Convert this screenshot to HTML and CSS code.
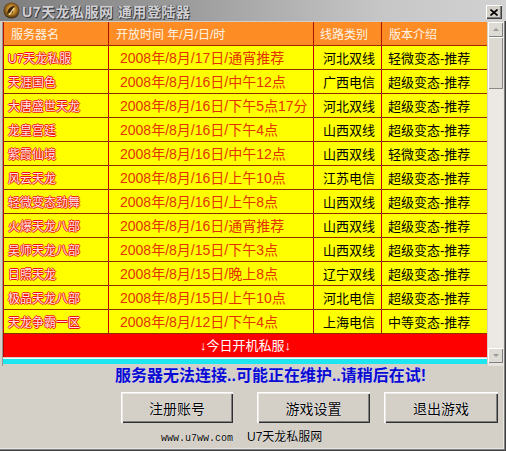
FILE: index.html
```html
<!DOCTYPE html>
<html lang="zh-CN">
<head>
<meta charset="utf-8">
<title>U7天龙私服网 通用登陆器</title>
<link rel="stylesheet" href="styles.css">
</head>
<body>
<div class="window">
  <div class="titlebar">
    <svg class="app-icon" width="17" height="17" viewBox="0 0 17 17">
      <defs>
        <radialGradient id="gold" cx="50%" cy="45%" r="55%">
          <stop offset="0" stop-color="#f6d27a"/>
          <stop offset="0.55" stop-color="#b07a22"/>
          <stop offset="1" stop-color="#3a2410"/>
        </radialGradient>
      </defs>
      <circle cx="8.5" cy="8.5" r="8" fill="url(#gold)"/>
      <path d="M4 12 C5 6 8 4 12 4 C10 6 9 8 10 11 C8 10 6 11 4 12Z" fill="#3b220c"/>
      <path d="M6 13 L11 6" stroke="#ffe9a8" stroke-width="1.2"/>
    </svg>
    <span class="title">U7天龙私服网 通用登陆器</span>
    <button class="close" aria-label="关闭">
      <svg width="8" height="7" viewBox="0 0 8 7"><path d="M0.5 0.5 L7.5 6.5 M7.5 0.5 L0.5 6.5" stroke="#000" stroke-width="1.6"/></svg>
    </button>
  </div>

  <div class="frame">
    <div class="content">
      <table class="servers">
        <colgroup>
          <col class="c-name"><col class="c-time"><col class="c-line"><col class="c-ver">
        </colgroup>
        <thead>
          <tr>
            <th class="h-name">服务器名</th>
            <th class="h-time">开放时间 年/月/日/时</th>
            <th class="h-line">线路类别</th>
            <th class="h-ver">版本介绍</th>
          </tr>
        </thead>
        <tbody>
          <tr><td class="name">U7天龙私服</td><td class="time">2008年/8月/17日/通宵推荐</td><td class="line">河北双线</td><td class="ver">轻微变态-推荐</td></tr>
          <tr><td class="name">天涯国色</td><td class="time">2008年/8月/16日/中午12点</td><td class="line">广西电信</td><td class="ver">超级变态-推荐</td></tr>
          <tr><td class="name">大唐盛世天龙</td><td class="time">2008年/8月/16日/下午5点17分</td><td class="line">河北双线</td><td class="ver">超级变态-推荐</td></tr>
          <tr><td class="name">龙皇宫廷</td><td class="time">2008年/8月/16日/下午4点</td><td class="line">山西双线</td><td class="ver">超级变态-推荐</td></tr>
          <tr><td class="name">紫霞仙境</td><td class="time">2008年/8月/16日/中午12点</td><td class="line">山西双线</td><td class="ver">轻微变态-推荐</td></tr>
          <tr><td class="name">风云天龙</td><td class="time">2008年/8月/16日/上午10点</td><td class="line">江苏电信</td><td class="ver">超级变态-推荐</td></tr>
          <tr><td class="name">轻微变态劲舞</td><td class="time">2008年/8月/16日/上午8点</td><td class="line">山西双线</td><td class="ver">超级变态-推荐</td></tr>
          <tr><td class="name">火爆天龙八部</td><td class="time">2008年/8月/16日/通宵推荐</td><td class="line">山西双线</td><td class="ver">超级变态-推荐</td></tr>
          <tr><td class="name">吴师天龙八部</td><td class="time">2008年/8月/15日/下午3点</td><td class="line">山西双线</td><td class="ver">超级变态-推荐</td></tr>
          <tr><td class="name">日照天龙</td><td class="time">2008年/8月/15日/晚上8点</td><td class="line">辽宁双线</td><td class="ver">超级变态-推荐</td></tr>
          <tr><td class="name">极品天龙八部</td><td class="time">2008年/8月/15日/上午10点</td><td class="line">河北电信</td><td class="ver">超级变态-推荐</td></tr>
          <tr><td class="name">天龙争霸一区</td><td class="time">2008年/8月/12日/下午4点</td><td class="line">上海电信</td><td class="ver">中等变态-推荐</td></tr>
        </tbody>
      </table>
      <div class="today">↓今日开机私服↓</div>
      <div class="next-strip"></div>
    </div>
    <div class="scrollbar">
      <div class="sb-btn sb-up"><span class="arrow up"></span></div>
      <div class="sb-thumb"></div>
      <div class="sb-track"></div>
      <div class="sb-btn sb-down"><span class="arrow down"></span></div>
    </div>
  </div>

  <div class="message">服务器无法连接..可能正在维护..请稍后在试!</div>

  <div class="buttons">
    <button class="btn btn-reg">注册账号</button>
    <button class="btn btn-set">游戏设置</button>
    <button class="btn btn-exit">退出游戏</button>
  </div>

  <div class="footer"><span class="url">www.u7ww.com</span><span class="site">U7天龙私服网</span></div>
</div>
</body>
</html>
```

FILE: styles.css
```css
* { box-sizing: border-box; }

html, body {
  margin: 0;
  padding: 0;
  background: #d4d0c8;
}

.window {
  width: 506px;
  height: 451px;
  background: #d4d0c8;
  font-family: "Liberation Sans", "Noto Sans CJK SC", sans-serif;
  box-shadow: inset -1px -1px 0 #404040, inset -2px -2px 0 #808080, inset -3px -3px 0 #e8e6e2;
  display: flex;
  flex-direction: column;
}

/* ---------- title bar ---------- */
.titlebar {
  height: 21px;
  display: flex;
  align-items: center;
  padding: 0 4px 0 3px;
  background: linear-gradient(to right, #7e7e7e 0%, #9a9a9a 35%, #c6c6c6 75%, #d2d2d2 100%);
}

.app-icon { flex: none; }

.title {
  margin-left: 2px;
  font-size: 14px;
  font-weight: bold;
  letter-spacing: 0.5px;
  color: #cfcfd4;
  text-shadow: 1px 1px 0 #3a3a3a, -1px 0 0 #5a5a5a;
  white-space: nowrap;
}

.close {
  margin-left: auto;
  margin-top: 3px;
  width: 16px;
  height: 14px;
  padding: 0;
  display: flex;
  align-items: center;
  justify-content: center;
  background: #d4d0c8;
  border: none;
  box-shadow: inset 1px 1px 0 #ffffff, inset -1px -1px 0 #404040, inset -2px -2px 0 #808080;
}

/* ---------- server list ---------- */
.frame {
  margin: 1px 3px 0 2px;
  height: 344px;
  display: flex;
  border-left: 1px solid #9a968e;
  overflow: hidden;
}

.content {
  width: 485px;
  overflow: hidden;
  background: #d4d0c8;
}

.servers {
  width: 484px;
  border-collapse: collapse;
  table-layout: fixed;
  background: #ffff00;
  font-size: 13px;
}

.c-name { width: 105px; }
.c-time { width: 205px; }
.c-line { width: 68px; }
.c-ver  { width: 106px; }

.servers th {
  height: 23px;
  padding: 0;
  text-align: left;
  font-weight: normal;
  font-size: 12px;
  color: #fff4e6;
  background: #fe8c25;
  border-left: 1px solid #b01000;
  border-right: 1px solid #b01000;
  border-bottom: 1px solid #a02800;
}

.h-name { padding-left: 7px !important; }
.h-time { padding-left: 7px !important; }
.h-line { padding-left: 6px !important; }
.h-ver  { padding-left: 7px !important; }

.servers td {
  height: 24px;
  padding: 0;
  white-space: nowrap;
  overflow: hidden;
  border-left: 1px solid #c80000;
  border-right: 1px solid #c80000;
  border-bottom: 1px solid #8a3000;
}

.name {
  padding-left: 4px !important;
  font-size: 12px;
  color: #ffe4e4;
  text-shadow: 1px 0 0 #f01010, -1px 0 0 #f01010, 0 1px 0 #f01010, 0 -1px 0 #f01010;
}

.time {
  padding-left: 11px !important;
  font-size: 14px;
  color: #e23200;
}

.line {
  padding-left: 9px !important;
  color: #000;
}

.ver {
  padding-left: 6px !important;
  color: #000;
}

.today {
  width: 484px;
  height: 23px;
  line-height: 23px;
  text-align: center;
  font-size: 13px;
  color: #ffffff;
  background: #ff0000;
  border-left: 1px solid #b00000;
}

.next-strip {
  width: 485px;
  height: 6px;
  margin-top: 1px;
  background: #1ee6f0;
  border-top: 1px solid #f4fcfc;
}

/* ---------- scrollbar ---------- */
.scrollbar {
  width: 15px;
  display: flex;
  flex-direction: column;
  background: #e6e3de;
  margin-left: 1px;
}

.sb-btn {
  height: 15px;
  flex: none;
  display: flex;
  align-items: center;
  justify-content: center;
  background: #dedad4;
  box-shadow: inset 1px 1px 0 #ffffff, inset -1px -1px 0 #808080;
}

.sb-thumb {
  height: 52px;
  flex: none;
  background: #dcd8d2;
  box-shadow: inset 1px 1px 0 #ffffff, inset -1px -1px 0 #8a8a8a;
}

.sb-track {
  flex: 1;
  background: #ece9e5;
}

.sb-down { margin-bottom: 3px; }

.arrow {
  width: 0;
  height: 0;
  border-left: 3px solid transparent;
  border-right: 3px solid transparent;
}
.arrow.up { border-bottom: 3px solid #9a9a9a; }
.arrow.down { border-top: 3px solid #9a9a9a; }

/* ---------- message ---------- */
.message {
  height: 18px;
  line-height: 18px;
  margin-top: 1px;
  padding-left: 115px;
  font-size: 16px;
  font-weight: bold;
  color: #0a0ad2;
  text-shadow: 0 0 1px #dcdcff;
  white-space: nowrap;
}

/* ---------- buttons ---------- */
.buttons {
  display: flex;
  margin-top: 7px;
  padding-left: 121px;
}

.btn {
  height: 31px;
  padding: 0;
  font-family: "Liberation Sans", "Noto Sans CJK SC", sans-serif;
  font-size: 14px;
  color: #000;
  text-shadow: 0 0 1px #ffffff, 0 0 1px #ffffff;
  background: #d4d0c8;
  border: none;
  box-shadow: inset 1px 1px 0 #ffffff, inset 2px 2px 0 #ece9e5, inset -1px -1px 0 #303030, inset -2px -2px 0 #808080;
}

.btn-reg  { width: 112px; }
.btn-set  { width: 113px; margin-left: 24px; }
.btn-exit { width: 114px; margin-left: 14px; }

/* ---------- footer ---------- */
.footer {
  margin-top: 7px;
  height: 14px;
  line-height: 14px;
  padding-left: 161px;
  font-size: 12px;
  color: #000;
  text-shadow: 0 0 1px #ffffff;
  white-space: nowrap;
}

.url {
  font-family: "Liberation Mono", monospace;
  font-size: 10px;
}

.site { margin-left: 14px; }
```
